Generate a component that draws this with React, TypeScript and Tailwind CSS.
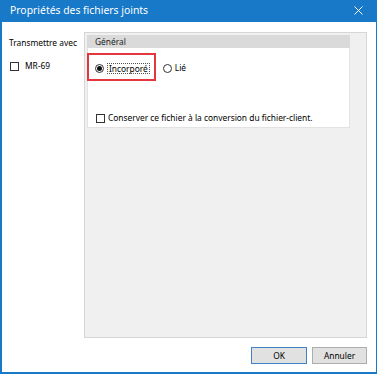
import React from 'react';

const font = { fontFamily: '"Noto Sans", "Open Sans", sans-serif' };

function Radio({ checked }: { checked?: boolean }) {
  return (
    <span className="flex h-[9px] w-[9px] shrink-0 items-center justify-center rounded-full border border-[#333] bg-white">
      {checked && <span className="h-[5px] w-[5px] rounded-full bg-[#111]" />}
    </span>
  );
}

function Check() {
  return <span className="h-[9px] w-[9px] shrink-0 border border-[#333] bg-white" />;
}

export default function App() {
  return (
    <div
      className="flex h-[374px] w-[377px] flex-col bg-[#1979c9] pb-[2px] pl-[2px] pr-[1px]"
      style={font}
    >
      {/* Title bar */}
      <div className="flex h-[22px] shrink-0 items-center justify-between pl-[8px] pr-[13px] text-[10.4px] text-white">
        <span>Propriétés des fichiers joints</span>
        <svg width="9" height="9" viewBox="0 0 9 9" className="mb-[1px]">
          <path d="M0.5 0.5 L8.5 8.5 M8.5 0.5 L0.5 8.5" stroke="#fff" strokeWidth="1" />
        </svg>
      </div>

      {/* Client area */}
      <div className="flex flex-1 flex-col bg-white pb-[8px] pt-[10px] text-[8.4px] leading-[12px] text-black">
        <div className="flex">
          {/* Left column */}
          <div className="flex w-[82px] shrink-0 flex-col pl-[7px] pt-[5px]">
            <span>Transmettre avec</span>
            <div className="mt-[11px] flex items-center gap-[6px] pl-[1px]">
              <Check />
              <span>MR-69</span>
            </div>
          </div>

          {/* Tab panel */}
          <div className="flex h-[306px] w-[283px] flex-col border border-[#d6d6d6] bg-[#f0f0f0] pl-[2px] pr-[16px] pt-[2px]">
            <div className="flex h-[13px] items-center bg-[#dadada] pl-[8px] text-[#222]">Général</div>
            <div className="relative h-[80px] border-x border-b border-[#e2e2e2] bg-white pl-[7px] pt-[14px]">
              <div className="flex h-[12px] items-center">
                <Radio checked />
                <span className="ml-[3px] border border-dotted border-[#555] px-[1px] leading-[9px]">Incorporé</span>
                <span className="ml-[13px]">
                  <Radio />
                </span>
                <span className="ml-[3px]">Lié</span>
              </div>
              <div className="mt-[38px] flex h-[12px] items-center gap-[3px] pl-[1px]">
                <Check />
                <span>Conserver ce fichier à la conversion du fichier-client.</span>
              </div>
              <div className="absolute left-[-1px] top-[5px] h-[28px] w-[69px] border-2 border-[#e4373d]" />
            </div>
          </div>
        </div>

        <div className="mt-[9px] flex justify-end gap-[5px] pr-[9px]">
          <button className="h-[17px] w-[56px] border border-[#3d83c6] bg-[#e1e1e1] text-[8.4px] text-black">
            OK
          </button>
          <button className="h-[17px] w-[55px] border border-[#adadad] bg-[#e1e1e1] text-[8.4px] text-black">
            Annuler
          </button>
        </div>
      </div>
    </div>
  );
}
